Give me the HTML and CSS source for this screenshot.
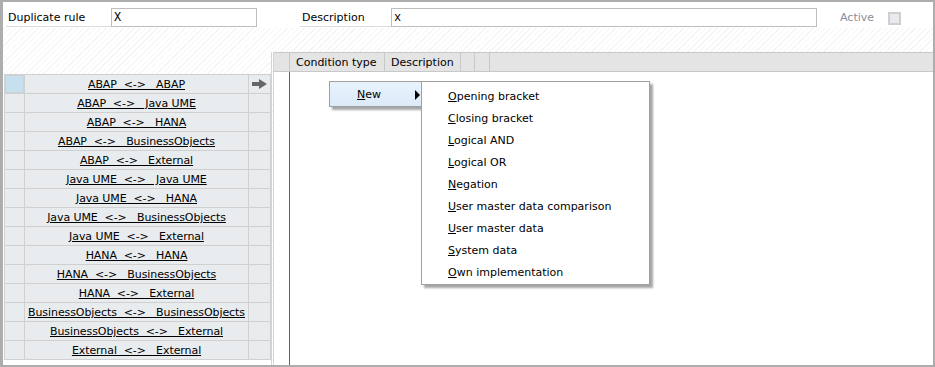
FILE: index.html
```html
<!DOCTYPE html>
<html lang="en">
<head>
    <meta charset="UTF-8">
    <title>Rule conditions</title>
    <link rel="stylesheet" href="styles.css">
</head>
<body>
    <div class="window">
        <div class="toprow">
            <div class="field-label lbl-rule">Duplicate rule</div>
            <div class="input in-rule">X</div>
            <div class="field-label lbl-desc">Description</div>
            <div class="input in-desc">x</div>
            <span class="active-label">Active</span>
            <span class="checkbox"></span>
        </div>

        <div class="main">
            <div class="rule-side">
                <div class="rule-list">
                    <div class="row current">
                        <div class="sel"></div>
                        <div class="name"><a>ABAP  &lt;-&gt;   ABAP</a></div>
                        <div class="go">
                            <svg width="15" height="10" viewBox="0 0 15 10"><rect x="0" y="3" width="8" height="4" fill="#666"/><polygon points="7,0 15,5 7,10" fill="#666"/></svg>
                        </div>
                    </div>
                    <div class="row"><div class="sel"></div><div class="name"><a>ABAP  &lt;-&gt;   Java UME</a></div><div class="go"></div></div>
                    <div class="row"><div class="sel"></div><div class="name"><a>ABAP  &lt;-&gt;   HANA</a></div><div class="go"></div></div>
                    <div class="row"><div class="sel"></div><div class="name"><a>ABAP  &lt;-&gt;   BusinessObjects</a></div><div class="go"></div></div>
                    <div class="row"><div class="sel"></div><div class="name"><a>ABAP  &lt;-&gt;   External</a></div><div class="go"></div></div>
                    <div class="row"><div class="sel"></div><div class="name"><a>Java UME  &lt;-&gt;   Java UME</a></div><div class="go"></div></div>
                    <div class="row"><div class="sel"></div><div class="name"><a>Java UME  &lt;-&gt;   HANA</a></div><div class="go"></div></div>
                    <div class="row"><div class="sel"></div><div class="name"><a>Java UME  &lt;-&gt;   BusinessObjects</a></div><div class="go"></div></div>
                    <div class="row"><div class="sel"></div><div class="name"><a>Java UME  &lt;-&gt;   External</a></div><div class="go"></div></div>
                    <div class="row"><div class="sel"></div><div class="name"><a>HANA  &lt;-&gt;   HANA</a></div><div class="go"></div></div>
                    <div class="row"><div class="sel"></div><div class="name"><a>HANA  &lt;-&gt;   BusinessObjects</a></div><div class="go"></div></div>
                    <div class="row"><div class="sel"></div><div class="name"><a>HANA  &lt;-&gt;   External</a></div><div class="go"></div></div>
                    <div class="row"><div class="sel"></div><div class="name"><a>BusinessObjects  &lt;-&gt;   BusinessObjects</a></div><div class="go"></div></div>
                    <div class="row"><div class="sel"></div><div class="name"><a>BusinessObjects  &lt;-&gt;   External</a></div><div class="go"></div></div>
                    <div class="row"><div class="sel"></div><div class="name"><a>External  &lt;-&gt;   External</a></div><div class="go"></div></div>
                </div>
            </div>

            <div class="conditions">
                <div class="cond-head">
                    <div class="hcell c0"></div>
                    <div class="hcell c1">Condition type</div>
                    <div class="hcell c2">Description</div>
                    <div class="hcell c3"></div>
                    <div class="hcell c4"></div>
                </div>
                <div class="cond-body">
                    <div class="cond-mark"></div>
                </div>
            </div>
        </div>

        <!-- context menu -->
        <div class="menu">
            <div class="menu-new"><span><u>N</u>ew</span><span class="tri"></span></div>
        </div>
        <div class="submenu">
            <div class="item"><u>O</u>pening bracket</div>
            <div class="item"><u>C</u>losing bracket</div>
            <div class="item"><u>L</u>ogical AND</div>
            <div class="item"><u>L</u>ogical OR</div>
            <div class="item"><u>N</u>egation</div>
            <div class="item"><u>U</u>ser master data comparison</div>
            <div class="item"><u>U</u>ser master data</div>
            <div class="item"><u>S</u>ystem data</div>
            <div class="item"><u>O</u>wn implementation</div>
        </div>
    </div>
</body>
</html>
```

FILE: styles.css
```css
body {
    margin: 0;
    font-family: "DejaVu Sans", sans-serif;
    font-size: 11px;
    color: #000;
}
.window {
    position: relative;
    width: 935px;
    height: 367px;
    box-sizing: border-box;
    border: 2px solid #adadad;
    border-left-width: 3px;
    background: repeating-linear-gradient(135deg, #ffffff 0, #ffffff 3px, #f5f5f5 3px, #f5f5f5 4px);
    display: flex;
    flex-direction: column;
}
.toprow {
    height: 26px;
    box-sizing: border-box;
    padding-top: 6px;
    background: #fff;
    display: flex;
    align-items: flex-start;
}
.field-label {
    height: 19px;
    line-height: 20px;
    box-sizing: border-box;
    padding-left: 2px;
    border-bottom: 1px solid #dcdcdc;
}
.lbl-rule {
    margin-left: 3px;
    width: 105px;
}
.lbl-desc {
    margin-left: 43px;
    width: 91px;
}
.input {
    height: 19px;
    line-height: 18px;
    box-sizing: border-box;
    border: 1px solid #bdbdbd;
    background: #fff;
    padding-left: 2px;
    font-family: "Liberation Mono", monospace;
    font-size: 12px;
}
.in-rule {
    width: 146px;
}
.in-desc {
    width: 426px;
}
.active-label {
    margin-left: 23px;
    line-height: 20px;
    color: #8c8c9c;
}
.checkbox {
    margin-left: 14px;
    margin-top: 4px;
    width: 13px;
    height: 13px;
    box-sizing: border-box;
    border: 2px solid #cfcfcf;
    background: #e8eaee;
}

.main {
    margin-top: 24px;
    flex: 1;
    display: flex;
}
.rule-side {
    width: 268px;
    padding-top: 22px;
    border-right: 1px solid #d4d4d4;
    display: flex;
}
.rule-list {
    flex: 1;
    background: #fff;
    padding-left: 1px;
}
.row {
    display: flex;
    height: 19px;
    box-sizing: border-box;
    border-bottom: 1px solid #d0d0d0;
    border-left: 1px solid #d0d0d0;
    background: #e9ecef;
    width: 267px;
}
.row:first-child {
    border-top: 1px solid #d0d0d0;
    height: 20px;
}
.sel {
    width: 19px;
    border-right: 1px solid #d0d0d0;
}
.current .sel {
    background: #c7e0f0;
    box-shadow: inset 0 0 0 1px #d0d0d0;
}
.name {
    width: 223px;
    border-right: 1px solid #d0d0d0;
    text-align: center;
    line-height: 19px;
    letter-spacing: -0.08px;
    white-space: pre;
    overflow: hidden;
}
.name a {
    text-decoration: underline;
    color: #000;
}
.go {
    width: 21px;
    border-right: 1px solid #d0d0d0;
    display: flex;
    align-items: center;
    justify-content: center;
}

.conditions {
    flex: 1;
    margin-left: 1px;
    border-left: 1px solid #d4d4d4;
    background: #fff;
    display: flex;
    flex-direction: column;
}
.cond-head {
    display: flex;
    height: 20px;
    box-sizing: border-box;
    border-top: 1px solid #c8c8c8;
    border-bottom: 1px solid #c8c8c8;
    background: #e4e4e4;
}
.hcell {
    box-sizing: border-box;
    border-right: 1px solid #c8c8c8;
    line-height: 19px;
    padding-left: 6px;
    white-space: nowrap;
}
.c0 { width: 16px; }
.c1 { width: 95px; }
.c2 { width: 76px; }
.c3 { width: 14px; }
.c4 { width: 15px; }
.cond-body {
    flex: 1;
    display: flex;
}
.cond-mark {
    width: 16px;
    box-sizing: border-box;
    border-right: 1px solid #606060;
}

.menu {
    position: absolute;
    left: 326px;
    top: 79px;
    width: 92px;
    height: 26px;
    box-sizing: border-box;
    border: 1px solid #a0a0a0;
    border-right: none;
    background: linear-gradient(#e8f2fb, #dcebf8);
    box-shadow: 3px 3px 2px rgba(0, 0, 0, 0.35);
}
.menu-new {
    display: flex;
    align-items: center;
    height: 100%;
    padding-left: 27px;
    padding-top: 1px;
    box-sizing: border-box;
}
.tri {
    margin-left: 34px;
    width: 0;
    height: 0;
    border-top: 5px solid transparent;
    border-bottom: 5px solid transparent;
    border-left: 5px solid #000;
}
.submenu {
    position: absolute;
    left: 418px;
    top: 79px;
    width: 229px;
    box-sizing: border-box;
    border: 1px solid #a0a0a0;
    background: #fff;
    padding: 4px 0 0 26px;
    box-shadow: 3px 3px 2px rgba(0, 0, 0, 0.35);
}
.item {
    height: 22px;
    line-height: 22px;
}
```
